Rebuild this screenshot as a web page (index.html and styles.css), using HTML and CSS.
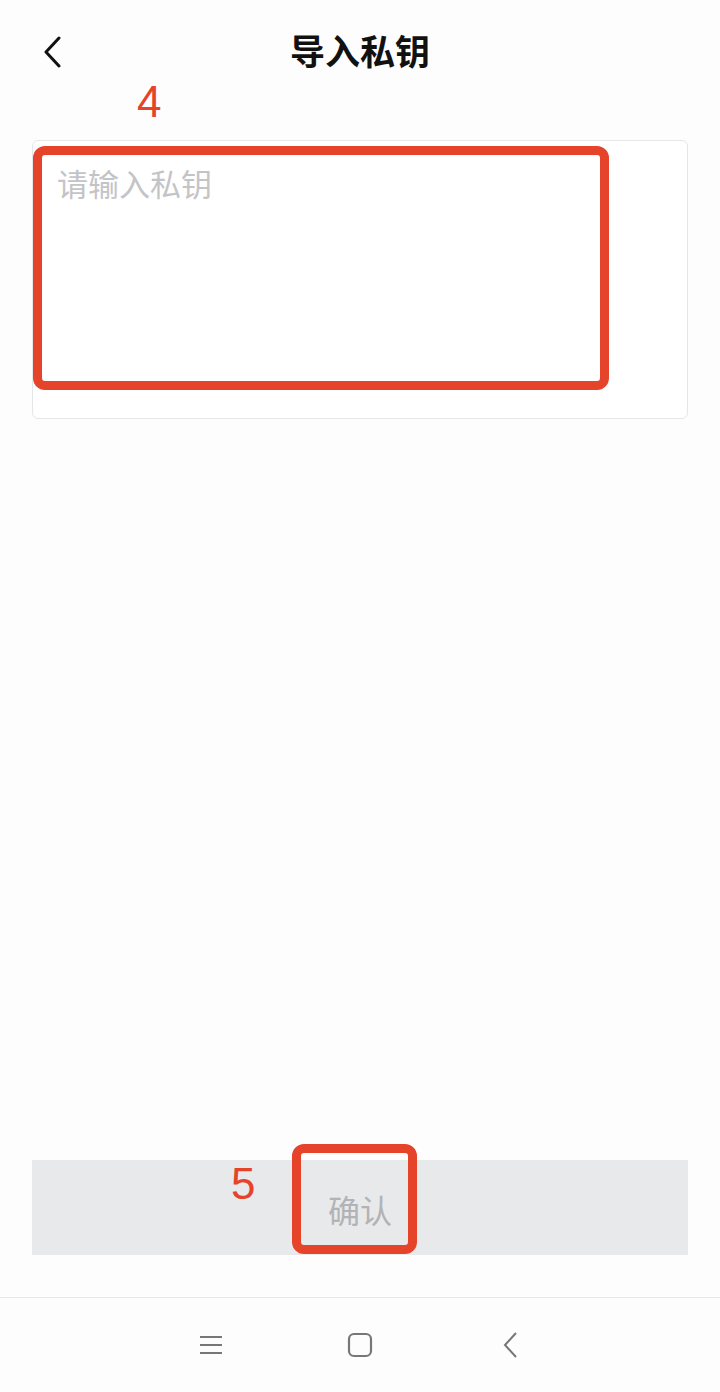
FILE: index.html
```html
<!DOCTYPE html>
<html lang="zh-CN">
<head>
    <meta charset="UTF-8">
    <meta name="viewport" content="width=device-width, initial-scale=1.0">
    <title>导入私钥</title>
    <link rel="stylesheet" href="styles.css">
</head>
<body>
    <div class="page">
        <header class="header">
            <button class="back-btn" aria-label="返回">
                <svg width="20" height="32" viewBox="0 0 20 32">
                    <path d="M16 2 L3 16 L16 30" fill="none" stroke="#111" stroke-width="3" stroke-linecap="round" stroke-linejoin="round"/>
                </svg>
            </button>
            <h1 class="title">导入私钥</h1>
            <span class="note note-4">4</span>
        </header>

        <main class="content">
            <div class="field">
                <textarea class="key-input" placeholder="请输入私钥"></textarea>
                <div class="mark mark-field"></div>
            </div>
        </main>

        <div class="actions">
            <button class="confirm-btn">确认</button>
            <div class="mark mark-btn"></div>
            <span class="note note-5">5</span>
        </div>

        <nav class="sys-nav">
            <svg class="nav-menu" width="24" height="20" viewBox="0 0 24 20">
                <path d="M1 2h22M1 10h22M1 18h22" stroke="#777" stroke-width="2"/>
            </svg>
            <svg class="nav-home" width="26" height="26" viewBox="0 0 26 26">
                <rect x="2" y="2" width="22" height="22" rx="5" fill="none" stroke="#777" stroke-width="2.2"/>
            </svg>
            <svg class="nav-back" width="16" height="28" viewBox="0 0 16 28">
                <path d="M13 2 L2 14 L13 26" fill="none" stroke="#777" stroke-width="2"/>
            </svg>
        </nav>
    </div>
</body>
</html>
```

FILE: styles.css
```css
* {
    margin: 0;
    padding: 0;
    box-sizing: border-box;
}

body {
    background-color: #fdfdfe;
    font-family: "Noto Sans CJK SC", "Noto Sans", sans-serif;
}

.page {
    width: 720px;
    height: 1392px;
    display: flex;
    flex-direction: column;
}

.header {
    position: relative;
    height: 100px;
    display: grid;
    grid-template-columns: 100px 1fr 100px;
    align-items: start;
}

.back-btn {
    background: none;
    border: none;
    margin: 36px 0 0 43px;
    width: 20px;
    height: 32px;
    cursor: pointer;
}

.title {
    text-align: center;
    font-size: 35px;
    font-weight: 700;
    color: #111;
    line-height: 48px;
    margin-top: 26px;
}

.note {
    position: absolute;
    color: #e6432b;
    font-family: "Liberation Sans", Arial, sans-serif;
    font-size: 44px;
    line-height: 1;
}

.note-4 {
    left: 137px;
    top: 80px;
}

.content {
    flex: 1;
    padding: 40px 32px 0;
}

.field {
    position: relative;
    height: 279px;
    background: #fff;
    border: 1px solid #e4e6ea;
    border-radius: 6px;
}

.key-input {
    width: 100%;
    height: 100%;
    border: none;
    background: transparent;
    resize: none;
    padding: 21px 24px;
    font-family: inherit;
    font-size: 31px;
    line-height: 42px;
    color: #333;
    outline: none;
}

.key-input::placeholder {
    color: #c3c4c7;
}

.mark {
    position: absolute;
    border: 9px solid #e6432b;
    border-radius: 12px;
    pointer-events: none;
}

.mark-field {
    left: 0;
    top: 5px;
    width: 576px;
    height: 244px;
}

.actions {
    position: relative;
    padding: 0 32px;
    margin-bottom: 42px;
}

.confirm-btn {
    display: block;
    width: 100%;
    height: 95px;
    border: none;
    background: #e8e9eb;
    color: #b2b3b6;
    font-family: inherit;
    font-size: 32px;
    padding-top: 2px;
}

.mark-btn {
    left: 292px;
    top: -16px;
    width: 125px;
    height: 110px;
}

.note-5 {
    left: 231px;
    top: 2px;
}

.sys-nav {
    height: 95px;
    border-top: 1px solid #e6e7ea;
    display: flex;
    justify-content: center;
    align-items: center;
    padding-right: 2px;
}

.nav-home {
    margin: 0 130px 0 124px;
}
```
